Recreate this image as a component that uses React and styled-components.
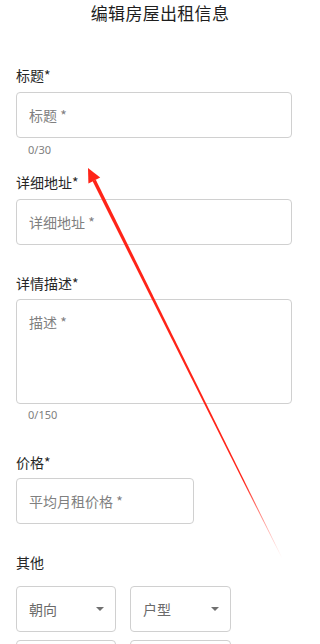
import React from 'react'
import styled, { createGlobalStyle } from 'styled-components'

const GlobalStyle = createGlobalStyle`
  body {
    margin: 0;
    background: #fff;
    font-family: "Noto Sans CJK SC", "Noto Sans", sans-serif;
    color: #222;
  }
`;

const Page = styled.div`
  position: relative;
  width: 320px;
  height: 644px;
  overflow: hidden;
  background: #fff;
`;

const Title = styled.h1`
  margin: 0;
  padding-top: 1px;
  height: 64px;
  font-size: 17px;
  font-weight: 400;
  line-height: 24px;
  text-align: center;
  color: #1e1e1e;
  letter-spacing: 0.3px;
`;

const Form = styled.form`
  padding: 0 28px 0 16px;
`;

const Field = styled.div`
  margin-bottom: ${p => p.$after}px;
`;

const Label = styled.div`
  font-size: 14px;
  line-height: 20px;
  color: #262626;
  margin-bottom: ${p => p.$gap || 7}px;
`;

const Input = styled.input`
  box-sizing: border-box;
  display: block;
  width: ${p => p.$width || '100%'};
  height: 46px;
  padding: 0 12px;
  border: 1px solid #d0d0d0;
  border-radius: 4px;
  font-family: inherit;
  font-size: 14px;
  color: #222;
  outline: none;
  &::placeholder { color: #808080; }
`;

const TextArea = styled.textarea`
  box-sizing: border-box;
  display: block;
  width: 100%;
  height: 105px;
  padding: 12px 12px;
  border: 1px solid #d0d0d0;
  border-radius: 4px;
  font-family: inherit;
  font-size: 14px;
  line-height: 20px;
  resize: none;
  outline: none;
  &::placeholder { color: #808080; }
`;

const Counter = styled.div`
  margin-top: ${p => p.$top}px;
  padding-left: 12px;
  font-family: "Noto Sans", sans-serif;
  font-size: 11px;
  line-height: 16px;
  color: #808080;
`;

const SelectRow = styled.div`
  display: flex;
  gap: 14px;
  margin-bottom: 8px;
`;

const Select = styled.div`
  box-sizing: border-box;
  width: ${p => p.$width}px;
  height: 46px;
  padding: 0 11px 0 12px;
  border: 1px solid #d0d0d0;
  border-radius: 4px;
  display: flex;
  align-items: center;
  justify-content: space-between;
  font-size: 14px;
  color: #6a6a6a;
`;

const Caret = styled.span`
  width: 0;
  height: 0;
  border-left: 4px solid transparent;
  border-right: 4px solid transparent;
  border-top: 4px solid #707070;
`;

const Overlay = styled.svg`
  position: absolute;
  left: 0;
  top: 0;
  pointer-events: none;
`;

const Arrow = () => (
  <Overlay width="320" height="644" viewBox="0 0 320 644">
    <defs>
      <linearGradient id="fade" gradientUnits="userSpaceOnUse" x1="88" y1="168" x2="282" y2="558">
        <stop offset="0" stopColor="#ff2418" />
        <stop offset="0.8" stopColor="#ff2418" />
        <stop offset="1" stopColor="#ff2418" stopOpacity="0" />
      </linearGradient>
    </defs>
    <polygon points="95.8,179.7 92.6,181.3 281.7,558.1 282.3,557.9" fill="url(#fade)" />
    <polygon points="88,168 100.2,177.5 88.4,183.5" fill="#ff2418" />
  </Overlay>
);

const App = () => {
  return (
    <Page>
      <GlobalStyle />
      <Title>编辑房屋出租信息</Title>
      <Form>
        <Field $after={14}>
          <Label>标题*</Label>
          <Input placeholder="标题 *" />
          <Counter $top={4}>0/30</Counter>
        </Field>
        <Field $after={28}>
          <Label>详细地址*</Label>
          <Input placeholder="详细地址 *" />
        </Field>
        <Field $after={29}>
          <Label $gap={6}>详情描述*</Label>
          <TextArea placeholder="描述 *" />
          <Counter $top={3}>0/150</Counter>
        </Field>
        <Field $after={28}>
          <Label $gap={6}>价格*</Label>
          <Input placeholder="平均月租价格 *" $width="178px" />
        </Field>
        <Field $after={0}>
          <Label $gap={14}>其他</Label>
          <SelectRow>
            <Select $width={100}>朝向<Caret /></Select>
            <Select $width={101}>户型<Caret /></Select>
          </SelectRow>
          <SelectRow>
            <Select $width={100} />
            <Select $width={101} />
          </SelectRow>
        </Field>
      </Form>
      <Arrow />
    </Page>
  )
}

export default App
